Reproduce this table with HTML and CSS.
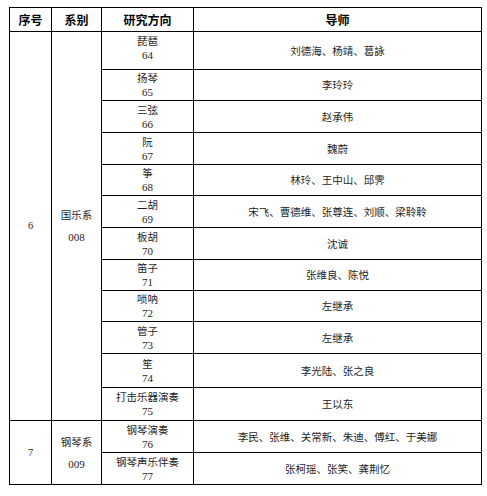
FILE: index.html
```html
<!DOCTYPE html>
<html lang="zh">
<head>
<meta charset="utf-8">
<link rel="stylesheet" href="styles.css">
</head>
<body>
<table class="tbl">
  <colgroup>
    <col class="c1"><col class="c2"><col class="c3"><col class="c4">
  </colgroup>
  <thead>
    <tr class="head"><th>序号</th><th>系别</th><th>研究方向</th><th>导师</th></tr>
  </thead>
  <tbody>
    <tr class="r r64">
      <td rowspan="12" class="num">6</td>
      <td rowspan="12" class="dept">国乐系<br><span class="n">008</span></td>
      <td class="dir">琵琶<br><span class="n">64</span></td><td class="tutor">刘德海、杨靖、葛詠</td></tr>
    <tr class="r h31"><td class="dir">扬琴<br><span class="n">65</span></td><td class="tutor">李玲玲</td></tr>
    <tr class="r h32"><td class="dir">三弦<br><span class="n">66</span></td><td class="tutor">赵承伟</td></tr>
    <tr class="r h32"><td class="dir">阮<br><span class="n">67</span></td><td class="tutor">魏蔚</td></tr>
    <tr class="r h31"><td class="dir">筝<br><span class="n">68</span></td><td class="tutor">林玲、王中山、邱霁</td></tr>
    <tr class="r h32"><td class="dir">二胡<br><span class="n">69</span></td><td class="tutor">宋飞、曹德维、张尊连、刘顺、梁聆聆</td></tr>
    <tr class="r h32"><td class="dir">板胡<br><span class="n">70</span></td><td class="tutor">沈诚</td></tr>
    <tr class="r h31"><td class="dir">笛子<br><span class="n">71</span></td><td class="tutor">张维良、陈悦</td></tr>
    <tr class="r h31"><td class="dir">唢呐<br><span class="n">72</span></td><td class="tutor">左继承</td></tr>
    <tr class="r h32"><td class="dir">管子<br><span class="n">73</span></td><td class="tutor">左继承</td></tr>
    <tr class="r h34"><td class="dir">笙<br><span class="n">74</span></td><td class="tutor">李光陆、张之良</td></tr>
    <tr class="r h33"><td class="dir">打击乐器演奏<br><span class="n">75</span></td><td class="tutor">王以东</td></tr>
    <tr class="r h32">
      <td rowspan="2" class="num">7</td>
      <td rowspan="2" class="dept">钢琴系<br><span class="n">009</span></td>
      <td class="dir">钢琴演奏<br><span class="n">76</span></td><td class="tutor">李民、张维、关常新、朱迪、傅红、于美娜</td></tr>
    <tr class="r h32"><td class="dir">钢琴声乐伴奏<br><span class="n">77</span></td><td class="tutor">张柯瑶、张笑、龚荆忆</td></tr>
  </tbody>
</table>
</body>
</html>
```
FILE: styles.css
```css
html, body {
  margin: 0;
  padding: 0;
  background: #ffffff;
}
body {
  padding: 7px 0 0 9px;
  font-family: "Noto Sans CJK SC", "Liberation Serif", serif;
  color: #1e1e1e;
}
.tbl {
  border-collapse: collapse;
  table-layout: fixed;
  width: 472px;
}
.c1 { width: 42px; }
.c2 { width: 50px; }
.c3 { width: 92px; }
.c4 { width: 288px; }
.tbl th, .tbl td {
  border: 1px solid #000;
  padding: 0;
  text-align: center;
  vertical-align: middle;
}
.head { height: 24px; }
.tbl th {
  font-size: 12px;
  font-weight: 700;
  color: #000;
  line-height: 14px;
}
.tbl td {
  font-size: 10.5px;
  line-height: 14px;
}
.n {
  font-family: "Liberation Serif", serif;
  font-size: 11px;
}
.tbl .dept { line-height: 22px; }
.num { font-family: "Liberation Serif", serif; font-size: 11px; }
.r64 { height: 38px; }
.r64 .dir { padding-bottom: 6px; }
.h31 { height: 31px; }
.h32 { height: 32px; }
.h33 { height: 33px; }
.h34 { height: 34px; }
```
